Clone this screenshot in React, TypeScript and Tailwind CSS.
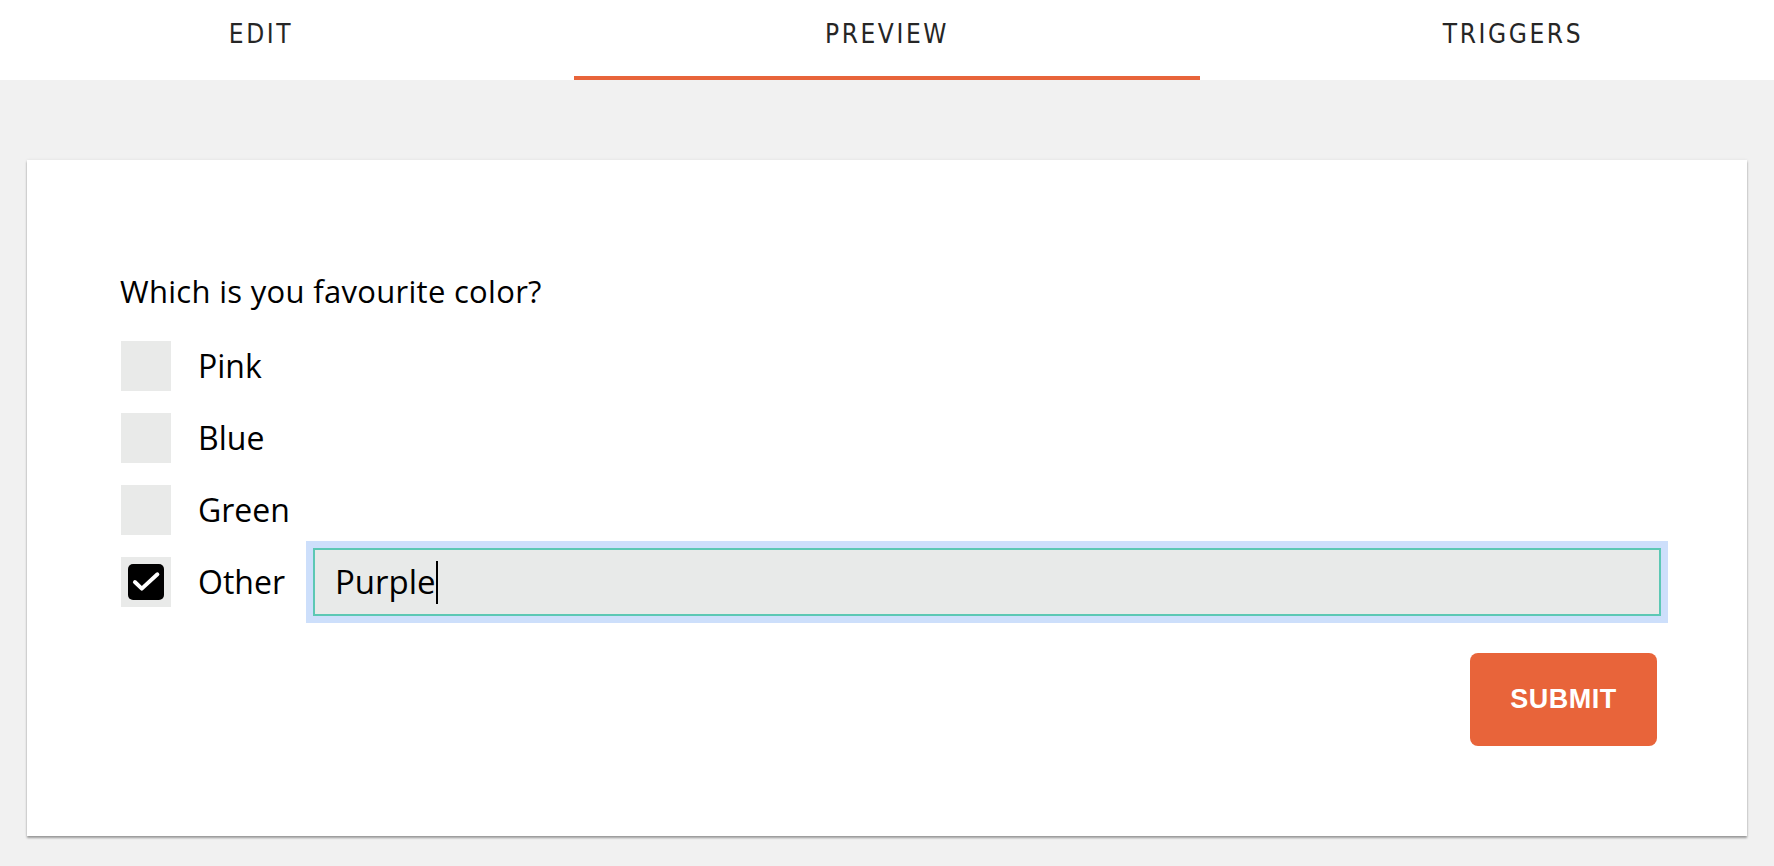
import { Check } from 'lucide-react';

const tabs = ['EDIT', 'PREVIEW', 'TRIGGERS'];

const options = ['Pink', 'Blue', 'Green'];

function Box({ checked }: { checked?: boolean }) {
    return (
        <div className="w-[50px] h-[50px] shrink-0 bg-[#e9eae9] flex items-center justify-center">
            {checked && (
                <div className="w-[36px] h-[36px] rounded-[5px] bg-black flex items-center justify-center">
                    <svg className="w-[36px] h-[36px]" viewBox="0 0 24 24" fill="none" stroke="#fff" strokeWidth={2.6} strokeLinecap="round" strokeLinejoin="round">
                        <path d="M4.6 12 L9.2 16.4 L19.6 6.8" />
                    </svg>
                </div>
            )}
        </div>
    );
}

export default function App() {
    const active = 'PREVIEW';
    return (
        <div className="min-h-screen bg-[#f1f1f1] font-['Open_Sans',sans-serif] text-black">
            {/* Tabs */}
            <div className="h-[80px] bg-white flex justify-center overflow-hidden">
                {tabs.map((t) => (
                    <div key={t} className="relative w-[626px] shrink-0 flex justify-center pt-[21px]">
                        <span className="font-['Liberation_Sans_Narrow','DejaVu_Sans_Condensed','Liberation_Sans',sans-serif] text-[26px] leading-[27px] tracking-[2.6px] text-[#262626]">
                            {t}
                        </span>
                        {t === active && <div className="absolute left-0 right-0 bottom-0 h-[4px] bg-[#e8643a]" />}
                    </div>
                ))}
            </div>

            {/* Form card */}
            <div className="mx-[27px] mt-[80px] h-[676px] bg-white shadow-[0_2px_2px_rgba(0,0,0,0.35),0_0_3px_rgba(0,0,0,0.08)] pt-[116px] pl-[94px] pr-[86px] flex flex-col">
                <div className="text-[31px] leading-[31px] tracking-[0.3px] mb-[34px] -ml-[1px]">Which is you favourite color?</div>

                <div className="flex flex-col gap-[22px]">
                    {options.map((o) => (
                        <div key={o} className="h-[50px] flex items-center">
                            <Box />
                            <span className="ml-[27px] text-[32px]">{o}</span>
                        </div>
                    ))}
                    <div className="h-[50px] flex items-center">
                        <Box checked />
                        <span className="ml-[27px] w-[115px] shrink-0 text-[32px]">Other</span>
                        <div className="flex-1 h-[68px] bg-[#e8eae9] border-2 border-[#5cc8b4] shadow-[0_0_0_7px_#cddffb] flex items-center pl-[20px] text-[33px]">
                            <span>Purple</span>
                            <span className="w-[2px] h-[43px] bg-black" />
                        </div>
                    </div>
                </div>

                <div className="flex justify-end mt-[46px] mr-[4px]">
                    <button className="w-[187px] h-[93px] rounded-[8px] bg-[#e8643a] text-white font-['Liberation_Sans',sans-serif] font-bold text-[27px] tracking-[0.5px]">
                        SUBMIT
                    </button>
                </div>
            </div>
        </div>
    );
}
